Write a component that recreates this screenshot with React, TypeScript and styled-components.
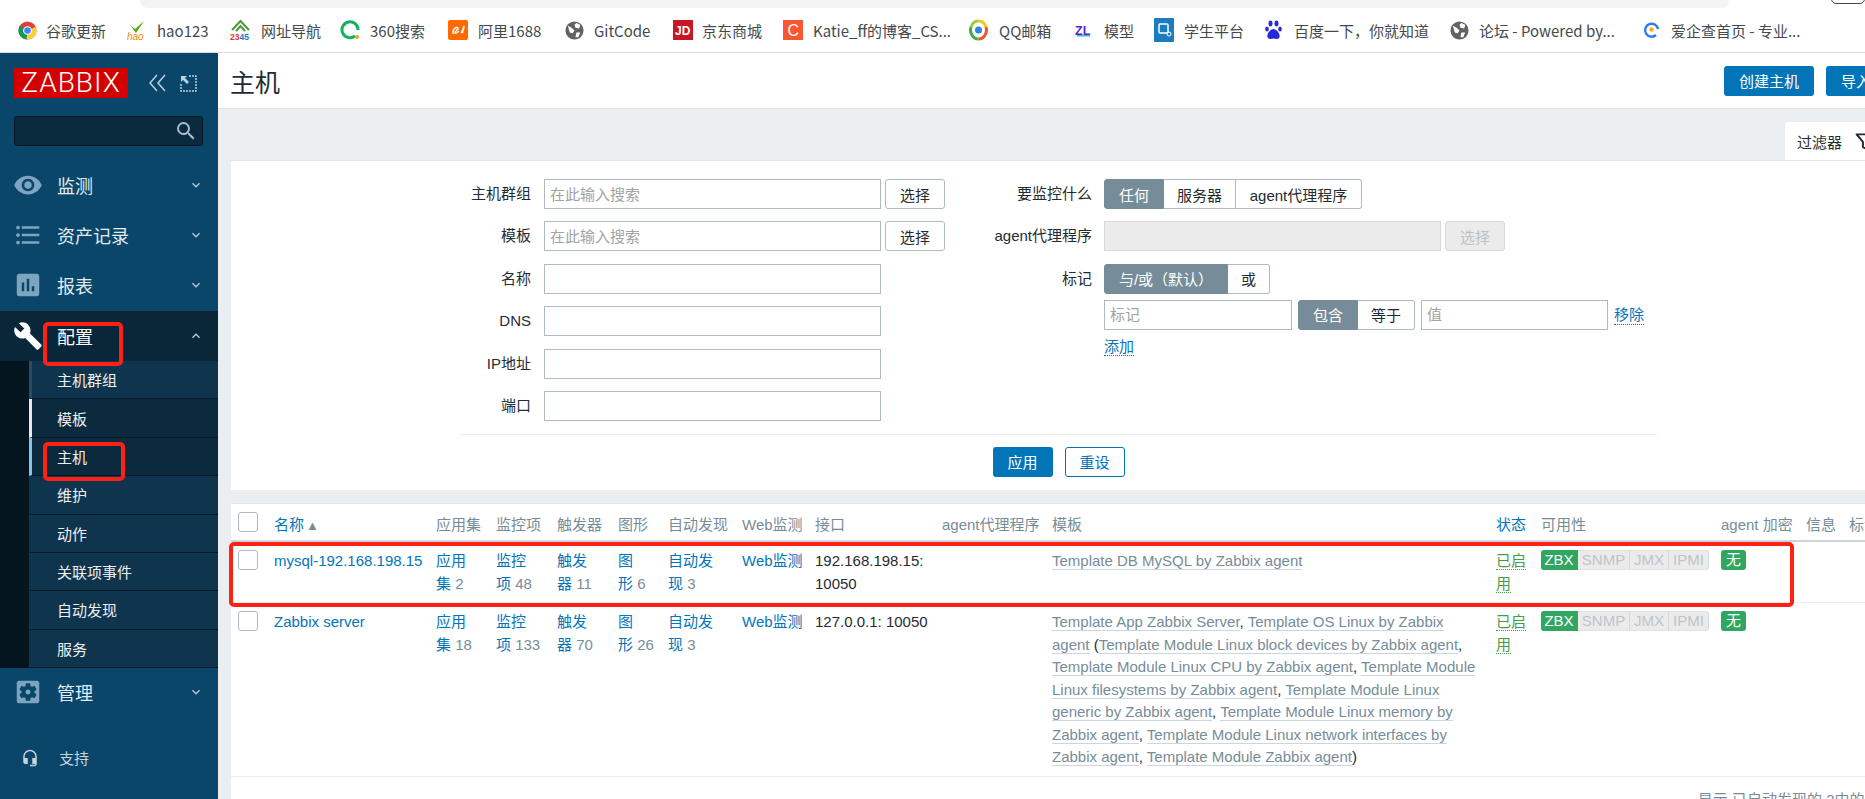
import styled, { createGlobalStyle } from "styled-components";
import {
  MdAssessment,
  MdBuild,
  MdFormatListBulleted,
  MdHeadsetMic,
  MdKeyboardArrowDown,
  MdKeyboardArrowUp,
  MdSearch,
  MdSettingsApplications,
  MdVisibility,
} from "react-icons/md";
import { FiFilter } from "react-icons/fi";
import { ReactNode } from "react";

const BLUE = "#0275b8";
const GREY = "#768d99";
const FONT = `"Liberation Sans", "Noto Sans CJK SC", sans-serif`;

const GlobalStyle = createGlobalStyle`
  html, body {
    margin: 0;
    height: 799px;
    overflow: hidden;
    background: #ebeef0;
    font-family: ${FONT};
    font-size: 15px;
    color: #1f2c33;
  }
`;

/* bookmark icons */
const Globe = () => (
  <svg width="19" height="19" viewBox="0 0 20 20">
    <circle cx="10" cy="10" r="9.5" fill="#5f6368" />
    <path d="M3 5l4 2 3 3-2 3-3-1zM12 2l4 2-1 4-4-1-1-3zM12 12l4 0-2 5-3 0z" fill="#fff" />
  </svg>
);
const icons: Record<string, ReactNode> = {
  chrome: (
    <svg width="19" height="19" viewBox="0 0 20 20">
      <circle cx="10" cy="10" r="9.5" fill="#db4437" />
      <path d="M10 10L1.8 5.2A9.5 9.5 0 0 0 9 19.5z" fill="#0f9d58" />
      <path d="M10 10l8.6-4A9.5 9.5 0 0 1 9 19.5z" fill="#ffcd40" />
      <circle cx="10" cy="10" r="4.6" fill="#fff" />
      <circle cx="10" cy="10" r="3.5" fill="#4285f4" />
    </svg>
  ),
  hao: (
    <svg width="21" height="21" viewBox="0 0 21 21">
      <path d="M3 5l5 4 9-8-8 12z" fill="#5aa812" />
      <text x="0" y="20" fontSize="10" fontFamily="Liberation Sans" fontStyle="italic" fill="#f08519">hao</text>
    </svg>
  ),
  n2345: (
    <svg width="21" height="23" viewBox="0 0 21 23">
      <path d="M2 11L10.500 2 19 11M6 12l4.500-5 4.500 5" fill="none" stroke="#4c9a3b" strokeWidth="2" />
      <text x="0" y="21" fontSize="8.500" fontWeight="bold" fontFamily="Liberation Sans" fill="#d8342c">23<tspan fill="#1c76c9">45</tspan></text>
    </svg>
  ),
  s360: (
    <svg width="20" height="20" viewBox="0 0 20 20">
      <path d="M15 16A8 8 0 1 1 18 10" fill="none" stroke="#14b05e" strokeWidth="3" />
      <circle cx="17" cy="17" r="2" fill="#f4a316" />
    </svg>
  ),
  ali: (
    <svg width="20" height="20" viewBox="0 0 20 20">
      <rect width="20" height="20" rx="2" fill="#ff6a00" />
      <path d="M5 14c-1-4 3-8 5-6 1 2-4 3-3 5 1 1 3-1 4-2M13 13c2-2 3-5 3-7-1 3-2 6-1 7" fill="none" stroke="#fff" strokeWidth="1.500" />
    </svg>
  ),
  globe: <Globe />,
  jd: (
    <svg width="20" height="20" viewBox="0 0 20 20">
      <rect width="20" height="20" fill="#c91623" />
      <text x="2" y="15" fontSize="12" fontFamily="Liberation Sans" fontWeight="bold" fill="#fff">JD</text>
    </svg>
  ),
  csdn: (
    <svg width="20" height="20" viewBox="0 0 20 20">
      <rect width="20" height="20" fill="#fc5531" />
      <text x="4.500" y="15.500" fontSize="16" fontFamily="Liberation Sans" fill="#fff">C</text>
    </svg>
  ),
  qq: (
    <svg width="19" height="22" viewBox="0 0 19 22">
      <path d="M9.500 2A8 9 0 0 1 17 8" fill="none" stroke="#f5c518" strokeWidth="3" />
      <path d="M17 8A8 9 0 0 1 9.500 20" fill="none" stroke="#ea5a2a" strokeWidth="3" />
      <path d="M9.500 20A8 9 0 0 1 2 8" fill="none" stroke="#3fae49" strokeWidth="3" />
      <path d="M2 8A8 9 0 0 1 9.500 2" fill="none" stroke="#9ccb3b" strokeWidth="3" />
      <circle cx="9.500" cy="11" r="3.500" fill="#2a86d6" />
    </svg>
  ),
  zl: (
    <svg width="18" height="20" viewBox="0 0 18 20">
      <text x="0" y="15" fontSize="12.500" fontWeight="bold" fontFamily="Liberation Sans" fill="#5a22c8">ZL</text>
      <rect x="2" y="15" width="13" height="1.500" fill="#2fc5c5" />
    </svg>
  ),
  student: (
    <svg width="20" height="24" viewBox="0 0 20 24">
      <rect width="20" height="24" rx="1" fill="#1b7cc0" />
      <rect x="5" y="6" width="9" height="9" rx="1" fill="none" stroke="#fff" strokeWidth="1.500" />
      <circle cx="15" cy="16" r="2" fill="none" stroke="#fff" />
    </svg>
  ),
  baidu: (
    <svg width="17" height="22" viewBox="0 0 17 22">
      <g fill="#2529d8">
        <ellipse cx="5.500" cy="4.500" rx="2" ry="3" />
        <ellipse cx="11.500" cy="4.500" rx="2" ry="3" />
        <ellipse cx="2" cy="10" rx="1.800" ry="2.500" />
        <ellipse cx="15" cy="10" rx="1.800" ry="2.500" />
        <path d="M8.500 10c-3 0-7 5-6 8 1 3 4 1.500 6 1.500s5 1.500 6-1.500c1-3-3-8-6-8z" />
      </g>
    </svg>
  ),
  aiqicha: (
    <svg width="17" height="20" viewBox="0 0 17 20">
      <path d="M13 15A6.500 6.500 0 1 1 15 9" fill="none" stroke="#2b7cf0" strokeWidth="2.400" />
      <circle cx="8.500" cy="9.500" r="2.200" fill="#f6b21b" />
    </svg>
  ),
};

const bookmarks = [
  { icon: "chrome", label: "谷歌更新", width: 109, slot: 28 },
  { icon: "hao", label: "hao123", width: 103, slot: 30 },
  { icon: "n2345", label: "网址导航", width: 110, slot: 31 },
  { icon: "s360", label: "360搜索", width: 108, slot: 30 },
  { icon: "ali", label: "阿里1688", width: 117, slot: 30 },
  { icon: "globe", label: "GitCode", width: 108, slot: 29 },
  { icon: "jd", label: "京东商城", width: 110, slot: 29 },
  { icon: "csdn", label: "Katie_ff的博客_CS...", width: 186, slot: 30 },
  { icon: "qq", label: "QQ邮箱", width: 106, slot: 30 },
  { icon: "zl", label: "模型", width: 79, slot: 29 },
  { icon: "student", label: "学生平台", width: 111, slot: 30 },
  { icon: "baidu", label: "百度一下，你就知道", width: 185, slot: 29 },
  { icon: "globe", label: "论坛 - Powered by...", width: 193, slot: 29 },
  { icon: "aiqicha", label: "爱企查首页 - 专业...", width: 160, slot: 28 },
];

const menu = [
  { icon: <MdVisibility />, label: "监测" },
  { icon: <MdFormatListBulleted />, label: "资产记录" },
  { icon: <MdAssessment />, label: "报表" },
];

const subMenu = [
  { label: "主机群组", marker: "#2c4a63", dark: false },
  { label: "模板", marker: "#e6e9eb", dark: true },
  { label: "主机", marker: "#80c4f5", dark: true },
  { label: "维护", marker: "transparent", dark: false },
  { label: "动作", marker: "transparent", dark: false },
  { label: "关联项事件", marker: "transparent", dark: false },
  { label: "自动发现", marker: "transparent", dark: false },
  { label: "服务", marker: "transparent", dark: false },
];

const columns = [43, 162, 60, 61, 61, 50, 74, 73, 127, 110, 444, 45, 180, 85, 43, 37];

const secondTemplates = [
  "Template Module Linux block devices by Zabbix agent",
  "Template Module Linux CPU by Zabbix agent",
  "Template Module Linux filesystems by Zabbix agent",
  "Template Module Linux generic by Zabbix agent",
  "Template Module Linux memory by Zabbix agent",
  "Template Module Linux network interfaces by Zabbix agent",
  "Template Module Zabbix agent",
];

const hosts = [
  {
    name: "mysql-192.168.198.15",
    counts: [2, 48, 11, 6, 3],
    iface: ["192.168.198.15:", "10050"],
    templates: (
      <TemplateLink>Template DB MySQL by Zabbix agent</TemplateLink>
    ),
  },
  {
    name: "Zabbix server",
    counts: [18, 133, 70, 26, 3],
    iface: ["127.0.0.1: 10050"],
    templates: (
      <>
        <TemplateLink>Template App Zabbix Server</TemplateLink>,{" "}
        <TemplateLink>Template OS Linux by Zabbix agent</TemplateLink> (
        {secondTemplates.map((t, i) => (
          <span key={t}>
            <TemplateLink>{t}</TemplateLink>
            {i < secondTemplates.length - 1 ? ", " : ""}
          </span>
        ))}
        )
      </>
    ),
  },
];

const linkCells = [
  ["应用", "集"],
  ["监控", "项"],
  ["触发", "器"],
  ["图", "形"],
  ["自动发", "现"],
];

const App = () => {
  return (
    <Page>
      <GlobalStyle />
      <TabStrip>
        <TabShape />
        <Avatar />
      </TabStrip>
      <BookmarkBar>
        {bookmarks.map((b) => (
          <Bookmark key={b.label} $width={b.width}>
            <BookmarkIcon $width={b.slot}>{icons[b.icon]}</BookmarkIcon>
            {b.label}
          </Bookmark>
        ))}
      </BookmarkBar>
      <Body>
        <Sidebar>
          <LogoRow>
            <Logo>ZABBIX</Logo>
            <svg width="20" height="18" viewBox="0 0 20 18" fill="none" stroke="#bcd0de" strokeWidth="1.500">
              <path d="M9 1L2 9l7 8M17 1l-7 8 7 8" />
            </svg>
            <svg width="17" height="17" viewBox="0 0 17 17" fill="none" stroke="#bcd0de" strokeWidth="1.500">
              <path d="M9 1h7v15H1V9" strokeDasharray="2 1" />
              <path d="M1 1h6L5 3l4 4-2 2-4-4-2 2z" fill="#bcd0de" stroke="none" />
            </svg>
          </LogoRow>
          <SearchBox>
            <MdSearch />
          </SearchBox>
          <nav>
            {menu.map((m) => (
              <MenuItem key={m.label}>
                <MenuIcon>{m.icon}</MenuIcon>
                <MenuLabel>{m.label}</MenuLabel>
                <MenuArrow>
                  <MdKeyboardArrowDown />
                </MenuArrow>
              </MenuItem>
            ))}
            <MenuItem $active>
              <MenuIcon $active>
                <MdBuild />
              </MenuIcon>
              <MenuLabel $active>配置</MenuLabel>
              <MenuArrow>
                <MdKeyboardArrowUp />
              </MenuArrow>
            </MenuItem>
            <SubMenu>
              {subMenu.map((s) => (
                <SubItem key={s.label} $marker={s.marker} $dark={s.dark}>
                  {s.label}
                </SubItem>
              ))}
            </SubMenu>
            <MenuItem>
              <MenuIcon>
                <MdSettingsApplications />
              </MenuIcon>
              <MenuLabel>管理</MenuLabel>
              <MenuArrow>
                <MdKeyboardArrowDown />
              </MenuArrow>
            </MenuItem>
          </nav>
          <Support>
            <MdHeadsetMic />
            <span>支持</span>
          </Support>
        </Sidebar>
        <Main>
          <Header>
            <Title>主机</Title>
            <HeaderActions>
              <PrimaryButton $width={90}>创建主机</PrimaryButton>
              <PrimaryButton $width={60}>导入</PrimaryButton>
            </HeaderActions>
          </Header>
          <Content>
            <FilterTabRow>
              <FilterTab>
                过滤器
                <FiFilter />
              </FilterTab>
            </FilterTabRow>
            <FilterPanel>
              <FilterColumns>
                <FilterColumn $width={730}>
                  <Field $label={300} $gap={13}>
                    <FieldLabel>主机群组</FieldLabel>
                    <FieldControl>
                      <TextInput $width={337} placeholder="在此输入搜索" readOnly />
                      <SelectButton>选择</SelectButton>
                    </FieldControl>
                  </Field>
                  <Field $label={300} $gap={13}>
                    <FieldLabel>模板</FieldLabel>
                    <FieldControl>
                      <TextInput $width={337} placeholder="在此输入搜索" readOnly />
                      <SelectButton>选择</SelectButton>
                    </FieldControl>
                  </Field>
                  {["名称", "DNS", "IP地址", "端口"].map((l) => (
                    <Field $label={300} $gap={13} key={l}>
                      <FieldLabel>{l}</FieldLabel>
                      <FieldControl>
                        <TextInput $width={337} readOnly />
                      </FieldControl>
                    </Field>
                  ))}
                </FilterColumn>
                <FilterColumn $width={720}>
                  <Field $label={131} $gap={12}>
                    <FieldLabel>要监控什么</FieldLabel>
                    <FieldControl>
                      <Segments>
                        <Segment $on $width={60}>任何</Segment>
                        <Segment $width={72}>服务器</Segment>
                        <Segment $width={126}>agent代理程序</Segment>
                      </Segments>
                    </FieldControl>
                  </Field>
                  <Field $label={131} $gap={12}>
                    <FieldLabel>agent代理程序</FieldLabel>
                    <FieldControl>
                      <TextInput $width={337} disabled />
                      <SelectButton disabled>选择</SelectButton>
                    </FieldControl>
                  </Field>
                  <Field $label={131} $gap={12}>
                    <FieldLabel>标记</FieldLabel>
                    <TagArea>
                      <Segments>
                        <Segment $on $width={124}>与/或（默认）</Segment>
                        <Segment $width={42}>或</Segment>
                      </Segments>
                      <TagRow>
                        <TextInput $width={188} placeholder="标记" readOnly />
                        <Segments>
                          <Segment $on $width={60}>包含</Segment>
                          <Segment $width={57}>等于</Segment>
                        </Segments>
                        <TextInput $width={187} placeholder="值" readOnly />
                        <DottedLink>移除</DottedLink>
                      </TagRow>
                      <AddRow>
                        <DottedLink>添加</DottedLink>
                      </AddRow>
                    </TagArea>
                  </Field>
                </FilterColumn>
              </FilterColumns>
              <Divider />
              <FilterActions>
                <PrimaryButton $width={60}>应用</PrimaryButton>
                <OutlineButton>重设</OutlineButton>
              </FilterActions>
            </FilterPanel>

            <TableCard>
              <HostTable>
                <colgroup>
                  {columns.map((w, i) => (
                    <Col key={i} $w={w} />
                  ))}
                </colgroup>
                <thead>
                  <tr>
                    <HeadCheck>
                      <CheckBox />
                    </HeadCheck>
                    <HeadCell $link>
                      名称<SortMark>▲</SortMark>
                    </HeadCell>
                    <HeadCell>应用集</HeadCell>
                    <HeadCell>监控项</HeadCell>
                    <HeadCell>触发器</HeadCell>
                    <HeadCell>图形</HeadCell>
                    <HeadCell>自动发现</HeadCell>
                    <HeadCell>Web监测</HeadCell>
                    <HeadCell>接口</HeadCell>
                    <HeadCell>agent代理程序</HeadCell>
                    <HeadCell>模板</HeadCell>
                    <HeadCell $link>状态</HeadCell>
                    <HeadCell>可用性</HeadCell>
                    <HeadCell>agent 加密</HeadCell>
                    <HeadCell>信息</HeadCell>
                    <HeadCell>标记</HeadCell>
                  </tr>
                </thead>
                <tbody>
                  {hosts.map((h) => (
                    <tr key={h.name}>
                      <CheckCell>
                        <CheckBox />
                      </CheckCell>
                      <Cell>
                        <PlainLink>{h.name}</PlainLink>
                      </Cell>
                      {linkCells.map((c, i) => (
                        <Cell key={c[0]}>
                          <PlainLink>
                            {c[0]}
                            <br />
                            {c[1]}
                          </PlainLink>{" "}
                          <Count>{h.counts[i]}</Count>
                        </Cell>
                      ))}
                      <Cell>
                        <PlainLink>Web监测</PlainLink>
                      </Cell>
                      <Cell>
                        {h.iface.map((line) => (
                          <div key={line}>{line}</div>
                        ))}
                      </Cell>
                      <Cell />
                      <TemplateCell>{h.templates}</TemplateCell>
                      <Cell>
                        <StatusLink>已启</StatusLink>
                        <br />
                        <StatusLink>用</StatusLink>
                      </Cell>
                      <Cell>
                        <Availability>
                          <AvailItem $on $width={37}>ZBX</AvailItem>
                          <AvailItem $width={52}>SNMP</AvailItem>
                          <AvailItem $width={39}>JMX</AvailItem>
                          <AvailItem $width={40}>IPMI</AvailItem>
                        </Availability>
                      </Cell>
                      <Cell>
                        <NoneBadge>无</NoneBadge>
                      </Cell>
                      <Cell />
                      <Cell />
                    </tr>
                  ))}
                </tbody>
              </HostTable>
            </TableCard>
            <TableFooter>显示 已自动发现的 2中的 2</TableFooter>
          </Content>
        </Main>
      </Body>
      <Annotation $x={43} $y={322} $w={80} $h={44} />
      <Annotation $x={43} $y={442} $w={82} $h={39} />
      <Annotation $x={229} $y={542} $w={1565} $h={65} />
    </Page>
  );
};

const Page = styled.div`
  position: relative;
  width: 1865px;
  height: 799px;
  overflow: hidden;
`;

const TabStrip = styled.div`
  position: relative;
  height: 8px;
  background: #fff;
`;

const TabShape = styled.div`
  margin-left: 140px;
  width: 1589px;
  height: 8px;
  background: #f1f3f4;
  border-radius: 0 0 8px 8px;
`;

const Avatar = styled.div`
  position: absolute;
  right: 0;
  top: -8px;
  width: 32px;
  height: 10px;
  border: 1px solid #444;
  border-radius: 5px;
`;

const BookmarkBar = styled.div`
  height: 44px;
  background: #fff;
  border-bottom: 1px solid #dadce0;
  display: flex;
  align-items: center;
  padding-left: 18px;
  white-space: nowrap;
`;

const Bookmark = styled.div<{ $width: number }>`
  width: ${(p) => p.$width}px;
  flex-shrink: 0;
  display: flex;
  align-items: center;
  font-family: "Noto Sans CJK SC", sans-serif;
  font-size: 15px;
  color: #45494d;
`;

const BookmarkIcon = styled.span<{ $width: number }>`
  width: ${(p) => p.$width}px;
  flex-shrink: 0;
  display: flex;
  align-items: center;
`;

const Body = styled.div`
  display: flex;
  height: 746px;
`;

const Sidebar = styled.aside`
  width: 218px;
  flex-shrink: 0;
  background: #0a466a;
  color: #f2f2f2;
  padding-top: 15px;
  box-sizing: border-box;
`;

const LogoRow = styled.div`
  display: flex;
  align-items: center;
  padding-left: 14px;
  height: 30px;

  svg:nth-of-type(1) {
    margin-left: 20px;
  }
  svg:nth-of-type(2) {
    margin-left: 12px;
  }
`;

const Logo = styled.div`
  width: 114px;
  height: 30px;
  background: #d40000;
  color: #fff;
  font-family: Roboto, "Liberation Sans", sans-serif;
  font-weight: 300;
  font-size: 28px;
  line-height: 30px;
  text-align: center;
  letter-spacing: 1px;
`;

const SearchBox = styled.div`
  margin: 18px 15px 15px 14px;
  height: 30px;
  box-sizing: border-box;
  background: #0a2a3e;
  border: 1px solid #04151f;
  border-radius: 3px;
  display: flex;
  align-items: center;
  justify-content: flex-end;
  padding-right: 4px;
  color: #a8bdcb;
  font-size: 24px;
`;

const MenuItem = styled.div<{ $active?: boolean }>`
  display: flex;
  align-items: center;
  height: 50px;
  box-sizing: border-box;
  padding-bottom: ${(p) => (p.$active ? 0 : 2)}px;
  background: ${(p) => (p.$active ? "#0a2639" : "transparent")};
`;

const MenuIcon = styled.span<{ $active?: boolean }>`
  width: 30px;
  margin-left: 13px;
  display: flex;
  font-size: 30px;
  color: ${(p) => (p.$active ? "#fff" : "#7ea5bf")};
`;

const MenuLabel = styled.span<{ $active?: boolean }>`
  margin-left: 14px;
  flex: 1;
  font-size: 18px;
  color: ${(p) => (p.$active ? "#fff" : "#e3ebf0")};
`;

const MenuArrow = styled.span`
  display: flex;
  margin-right: 14px;
  font-size: 16px;
  color: #b5c8d5;
`;

const SubMenu = styled.div`
  padding-left: 29px;
  background: #04151f;
`;

const SubItem = styled.div<{ $marker: string; $dark: boolean }>`
  height: 38.375px;
  box-sizing: border-box;
  display: flex;
  align-items: center;
  padding-left: 25px;
  border-left: 3px solid ${(p) => p.$marker};
  border-bottom: 1px solid #05192a;
  background: ${(p) => (p.$dark ? "#0b2a3e" : "#0f344e")};
  color: #f0f0f0;
`;

const Support = styled.div`
  display: flex;
  align-items: center;
  margin-top: 29px;
  padding-left: 21px;
  color: #c7d5de;
  font-size: 15px;

  svg {
    font-size: 18px;
    margin-right: 20px;
  }
`;

const Main = styled.main`
  width: 1680px;
  flex-shrink: 0;
`;

const Header = styled.header`
  height: 56px;
  box-sizing: border-box;
  background: #fff;
  border-bottom: 1px solid #dfe4e7;
  display: flex;
  align-items: center;
  justify-content: space-between;
  padding: 0 12px;
`;

const Title = styled.h1`
  margin: 0;
  font-size: 25px;
  font-weight: normal;
  color: #1f2c33;
`;

const HeaderActions = styled.div`
  display: flex;
  gap: 12px;
`;

const PrimaryButton = styled.button<{ $width: number }>`
  width: ${(p) => p.$width}px;
  height: 30px;
  padding: 0;
  border: 0;
  border-radius: 3px;
  background: ${BLUE};
  color: #fff;
  font: inherit;
`;

const OutlineButton = styled.button`
  width: 60px;
  height: 30px;
  padding: 0;
  background: #fff;
  border: 1px solid ${BLUE};
  border-radius: 3px;
  color: ${BLUE};
  font: inherit;
`;

const Content = styled.div`
  padding: 13px 12px 0 13px;
`;

const FilterTabRow = styled.div`
  display: flex;
  justify-content: flex-end;
`;

const FilterTab = styled.div`
  width: 101px;
  height: 38px;
  box-sizing: border-box;
  background: #fff;
  border-radius: 3px 3px 0 0;
  display: flex;
  align-items: center;
  padding-left: 12px;
  gap: 13px;
  color: #1f2c33;

  svg {
    font-size: 19px;
    stroke-width: 2.5;
  }
`;

const FilterPanel = styled.section`
  background: #fff;
  padding: 18px 0 13px;
  border-top: 1px solid #e3e7ea;
  box-sizing: border-box;
  height: 330px;
`;

const FilterColumns = styled.div`
  display: flex;
`;

const FilterColumn = styled.div<{ $width: number }>`
  width: ${(p) => p.$width}px;
  display: flex;
  flex-direction: column;
  gap: 12.4px;
`;

const Field = styled.div<{ $label: number; $gap: number }>`
  display: grid;
  grid-template-columns: ${(p) => p.$label}px 1fr;
  column-gap: ${(p) => p.$gap}px;
  align-items: start;
`;

const FieldLabel = styled.label`
  height: 30px;
  line-height: 29px;
  text-align: right;
  white-space: nowrap;
`;

const FieldControl = styled.div`
  display: flex;
  gap: 4px;
`;

const TextInput = styled.input<{ $width: number }>`
  width: ${(p) => p.$width}px;
  height: 30px;
  box-sizing: border-box;
  padding: 0 5px;
  border: 1px solid #acbbc7;
  background: #fff;
  font: inherit;
  color: #1f2c33;
  outline: none;

  &::placeholder {
    color: #a3a3a3;
    opacity: 1;
  }
  &:disabled {
    background: #ebebeb;
    border-color: #d5dadd;
  }
`;

const SelectButton = styled.button`
  width: 60px;
  height: 30px;
  padding: 0;
  background: #fff;
  border: 1px solid #acbbc7;
  border-radius: 3px;
  font: inherit;
  color: #1f2c33;

  &:disabled {
    background: #ebebeb;
    border-color: #d5dadd;
    color: #b9c2c8;
  }
`;

const Segments = styled.div`
  display: inline-flex;
  height: 30px;
  flex-shrink: 0;
`;

const Segment = styled.div<{ $on?: boolean; $width: number }>`
  width: ${(p) => p.$width}px;
  box-sizing: border-box;
  display: flex;
  align-items: center;
  justify-content: center;
  white-space: nowrap;
  border: 1px solid ${(p) => (p.$on ? GREY : "#acbbc7")};
  border-left-width: 0;
  background: ${(p) => (p.$on ? GREY : "#fff")};
  color: ${(p) => (p.$on ? "#fff" : "#1f2c33")};

  &:first-child {
    border-left-width: 1px;
    border-radius: 3px 0 0 3px;
  }
  &:last-child {
    border-radius: 0 3px 3px 0;
  }
`;

const TagArea = styled.div`
  display: flex;
  flex-direction: column;
  align-items: flex-start;
`;

const TagRow = styled.div`
  display: flex;
  align-items: center;
  gap: 6px;
  margin-top: 6px;
`;

const AddRow = styled.div`
  margin-top: 7px;
`;

const DottedLink = styled.span`
  color: ${BLUE};
  border-bottom: 1px dotted ${BLUE};
  line-height: 19px;
  white-space: nowrap;
`;

const Divider = styled.hr`
  margin: 13px 229px 12px 228px;
  border: 0;
  border-top: 1px solid #ebeef0;
`;

const FilterActions = styled.div`
  display: flex;
  justify-content: center;
  gap: 12px;
`;

const TableCard = styled.div`
  margin-top: 13px;
  background: #fff;
  border-top: 1px solid #dfe4e7;
`;

const HostTable = styled.table`
  table-layout: fixed;
  width: 1655px;
  border-collapse: separate;
  border-spacing: 0;
`;

const Col = styled.col<{ $w: number }>`
  width: ${(p) => p.$w}px;
`;

const HeadCell = styled.th<{ $link?: boolean }>`
  height: 38px;
  padding: 2px 0 0;
  box-sizing: border-box;
  border-bottom: 2px solid #ccd5db;
  text-align: left;
  font-weight: normal;
  white-space: nowrap;
  color: ${(p) => (p.$link ? BLUE : GREY)};
`;

const HeadCheck = styled(HeadCell)`
  padding: 0 0 0 7px;
`;

const SortMark = styled.span`
  color: ${GREY};
  font-size: 13px;
  margin-left: 2px;
`;

const Cell = styled.td`
  padding: 8px 0 7px;
  vertical-align: top;
  line-height: 22.5px;
  border-bottom: 1px solid #ebeef0;
  color: #1f2c33;
  white-space: nowrap;
`;

const CheckCell = styled(Cell)`
  padding-left: 7px;
`;

const TemplateCell = styled(Cell)`
  padding-right: 16px;
  white-space: normal;
`;

const CheckBox = styled.div`
  width: 20px;
  height: 20px;
  box-sizing: border-box;
  background: #fff;
  border: 1px solid #acbbc7;
  border-radius: 3px;
`;

const PlainLink = styled.span`
  color: ${BLUE};
`;

const Count = styled.span`
  color: ${GREY};
`;

const StatusLink = styled.span`
  color: #429e47;
  border-bottom: 1px dotted #429e47;
`;

function TemplateLink({ children }: { children: ReactNode }) {
  return <TemplateText>{children}</TemplateText>;
}

const TemplateText = styled.span`
  color: ${GREY};
  border-bottom: 1px solid #cdd6dc;
`;

const Availability = styled.div`
  display: flex;
  height: 20px;
`;

const AvailItem = styled.span<{ $on?: boolean; $width: number }>`
  width: ${(p) => p.$width}px;
  box-sizing: border-box;
  display: flex;
  align-items: center;
  justify-content: center;
  background: ${(p) => (p.$on ? "#2fa760" : "#ebebeb")};
  color: ${(p) => (p.$on ? "#fff" : "#bcc5cb")};
  border-right: 1px solid ${(p) => (p.$on ? "#2fa760" : "#d5dadd")};
  border-top: 1px solid ${(p) => (p.$on ? "#2fa760" : "#dfe3e5")};
  border-bottom: 1px solid ${(p) => (p.$on ? "#2fa760" : "#dfe3e5")};

  &:first-child {
    border-radius: 3px 0 0 3px;
  }
  &:last-child {
    border-radius: 0 3px 3px 0;
  }
`;

const NoneBadge = styled.div`
  width: 25px;
  height: 20px;
  border-radius: 3px;
  background: #2fa760;
  color: #fff;
  display: flex;
  align-items: center;
  justify-content: center;
`;

const TableFooter = styled.div`
  padding: 11px 9px 0 0;
  text-align: right;
  color: ${GREY};
  white-space: nowrap;
  background: #fff;
`;

const Annotation = styled.div<{ $x: number; $y: number; $w: number; $h: number }>`
  position: absolute;
  left: ${(p) => p.$x}px;
  top: ${(p) => p.$y}px;
  width: ${(p) => p.$w}px;
  height: ${(p) => p.$h}px;
  box-sizing: border-box;
  border: 4px solid #ff2016;
  border-radius: 5px;
  pointer-events: none;
`;

export default App;
